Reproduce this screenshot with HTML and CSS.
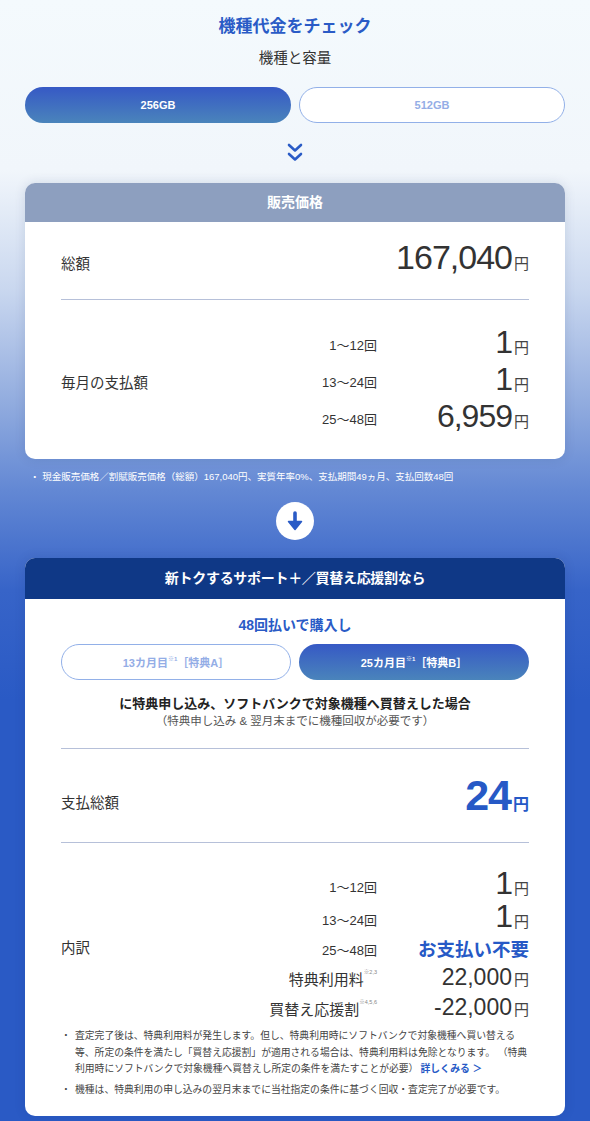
FILE: index.html
```html
<!DOCTYPE html>
<html lang="ja">
  <head>
    <meta charset="UTF-8" />
    <title>機種代金をチェック</title>
    <link rel="stylesheet" href="styles.css">
  </head>
  <body>
    <div class="page">
      <h2 class="title">機種代金をチェック</h2>
      <p class="subtitle">機種と容量</p>

      <div class="pills">
        <button class="pill active">256GB</button>
        <button class="pill">512GB</button>
      </div>

      <div class="chevrons">
        <svg width="18" height="22" viewBox="0 0 18 22">
          <path d="M3 3 L9 8.5 L15 3 M3 12 L9 17.5 L15 12" stroke="#2a5bc6" stroke-width="2.6" fill="none" stroke-linecap="round" stroke-linejoin="round"/>
        </svg>
      </div>

      <section class="card">
        <h3 class="card-head muted">販売価格</h3>
        <div class="card-body">
          <div class="total-row">
            <span class="label">総額</span>
            <span class="price big">167,040<small>円</small></span>
          </div>
          <div class="monthly">
            <span class="label side">毎月の支払額</span>
            <span class="period">1〜12回</span>
            <span class="price big">1<small>円</small></span>
            <span class="period">13〜24回</span>
            <span class="price big">1<small>円</small></span>
            <span class="period">25〜48回</span>
            <span class="price big">6,959<small>円</small></span>
          </div>
        </div>
      </section>

      <p class="outer-note">・ 現金販売価格／割賦販売価格（総額）167,040円、実質年率0%、支払期間49ヵ月、支払回数48回</p>

      <div class="down">
        <svg width="38" height="38" viewBox="0 0 38 38">
          <circle cx="19" cy="19" r="19" fill="#fff"/>
          <path d="M19 11 L19 22" stroke="#2a5bc6" stroke-width="3.6" stroke-linecap="round"/>
          <path d="M12.5 19.5 L25.5 19.5 L19 27.5 Z" fill="#2a5bc6" stroke="#2a5bc6" stroke-width="1.5" stroke-linejoin="round"/>
        </svg>
      </div>

      <section class="card">
        <h3 class="card-head navy">新トクするサポート＋／買替え応援割なら</h3>
        <div class="card-body">
          <p class="lead">48回払いで購入し</p>
          <div class="pills tabs">
            <button class="pill">13カ月目<sup>※1</sup>［特典A］</button>
            <button class="pill active">25カ月目<sup>※1</sup>［特典B］</button>
          </div>
          <p class="cond">に特典申し込み、ソフトバンクで対象機種へ買替えした場合</p>
          <p class="cond-sub">（特典申し込み &amp; 翌月末までに機種回収が必要です）</p>

          <div class="total-row pay">
            <span class="label">支払総額</span>
            <span class="price blue">24<small>円</small></span>
          </div>

          <div class="breakdown">
            <span class="label side">内訳</span>
            <span class="period">1〜12回</span>
            <span class="price big">1<small>円</small></span>
            <span class="period">13〜24回</span>
            <span class="price big">1<small>円</small></span>
            <span class="period">25〜48回</span>
            <span class="price free">お支払い不要</span>
            <span class="period item">特典利用料<sup>※2,3</sup></span>
            <span class="price mid">22,000<small>円</small></span>
            <span class="period item">買替え応援割<sup>※4,5,6</sup></span>
            <span class="price mid">-22,000<small>円</small></span>
          </div>

          <ul class="notes">
            <li>査定完了後は、特典利用料が発生します。但し、特典利用時にソフトバンクで対象機種へ買い替える等、所定の条件を満たし「買替え応援割」が適用される場合は、特典利用料は免除となります。 （特典利用時にソフトバンクで対象機種へ買替えし所定の条件を満たすことが必要）<a class="more">詳しくみる ＞</a></li>
            <li>機種は、特典利用の申し込みの翌月末までに当社指定の条件に基づく回収・査定完了が必要です。</li>
          </ul>
        </div>
      </section>
    </div>
  </body>
</html>
```

FILE: styles.css
```css
* {
  box-sizing: border-box;
  font-family: "Liberation Sans", "Noto Sans CJK JP", sans-serif;
}

body {
  margin: 0;
  padding: 0;
  min-height: 1121px;
  background: linear-gradient(
    to bottom,
    #f4fafd 0,
    #f1f6fb 170px,
    #c9d7ef 290px,
    #93addf 400px,
    #6388d4 490px,
    #3764c8 590px,
    #2a5ac5 700px,
    #2a5ac5 100%
  );
}

.page {
  padding: 15px 25px 9px;
}

.title {
  margin: 0;
  text-align: center;
  font-size: 17px;
  line-height: 24px;
  color: #2a5bc6;
  font-weight: bold;
}

.subtitle {
  margin: 8px 0 0;
  text-align: center;
  font-size: 14.5px;
  line-height: 22px;
  color: #333;
}

.pills {
  display: grid;
  grid-template-columns: 1fr 1fr;
  gap: 8px;
  margin-top: 18px;
}

.pill {
  height: 36px;
  border-radius: 18px;
  border: 1px solid #92b0e8;
  background: #fff;
  color: #94ade6;
  font-size: 11px;
  font-weight: bold;
  cursor: pointer;
}

.pill.active {
  border: none;
  color: #fff;
  background: linear-gradient(to bottom, #3659c5, #4a84bb);
}

.pill sup {
  font-size: 6px;
  vertical-align: top;
  line-height: 10px;
}

.chevrons {
  display: flex;
  justify-content: center;
  margin-top: 19px;
  height: 22px;
}

.card {
  margin-top: 19px;
  background: white;
  border-radius: 10px;
  overflow: hidden;
  box-shadow: 0 0 12px rgba(20, 40, 90, 0.12);
}

.card-head {
  margin: 0;
  text-align: center;
  color: #fff;
  font-size: 14px;
  font-weight: bold;
}

.card-head.muted {
  background: #8d9fbf;
  line-height: 39px;
}

.card-head.navy {
  background: #0f3886;
  line-height: 41px;
  font-size: 14px;
  letter-spacing: -0.3px;
}

.card-body {
  padding: 0 36px;
}

.label {
  font-size: 14.5px;
  color: #333;
}

.total-row {
  display: flex;
  justify-content: space-between;
  align-items: center;
  height: 78px;
  border-bottom: 1px solid #b6c0d9;
}

.total-row .label {
  padding-top: 4px;
}

.price {
  color: #333;
  text-align: right;
  line-height: 1;
  white-space: nowrap;
}

.price small {
  font-size: 15px;
  color: #444;
  margin-left: 2px;
  letter-spacing: 0;
}

.price.big {
  font-size: 32px;
  line-height: 28px;
  letter-spacing: -1px;
}

.total-row .price.big {
  font-size: 34px;
}

.price.mid {
  font-size: 23px;
  line-height: 24px;
}

.price.blue {
  color: #2659c6;
  font-size: 43px;
  font-weight: bold;
  letter-spacing: -1px;
}

.price.blue small {
  color: #2659c6;
  font-size: 16px;
  font-weight: bold;
}

.price.free {
  color: #2659c6;
  font-size: 18.5px;
  line-height: 24px;
  font-weight: bold;
}

.monthly,
.breakdown {
  display: grid;
  grid-template-columns: 1fr auto 152px;
  align-items: center;
}

.monthly {
  grid-template-rows: repeat(3, 37px);
  padding: 26px 0 22px;
}

.side {
  grid-row: 1 / -1;
  grid-column: 1;
}

.period {
  font-size: 13px;
  color: #333;
  text-align: right;
}

.period.item {
  font-size: 15px;
}

.period sup {
  font-size: 5.5px;
  color: #888;
  vertical-align: top;
  line-height: 8px;
}

.outer-note {
  margin: 11px 0 0 5px;
  font-size: 9.5px;
  line-height: 14px;
  color: #fff;
}

.down {
  display: flex;
  justify-content: center;
  margin-top: 18px;
}

.down + .card {
  margin-top: 18px;
}

.lead {
  margin: 0;
  padding-top: 16px;
  text-align: center;
  font-size: 14px;
  line-height: 20px;
  font-weight: bold;
  color: #2a5bc6;
}

.tabs {
  margin-top: 9px;
}

.cond {
  margin: 15px 0 0;
  text-align: center;
  font-size: 13px;
  line-height: 18px;
  font-weight: bold;
  color: #222;
}

.cond-sub {
  margin: 0;
  text-align: center;
  font-size: 11.5px;
  line-height: 16px;
  color: #555;
  padding-bottom: 19px;
  border-bottom: 1px solid #b6c0d9;
}

.total-row.pay {
  height: 94px;
}

.total-row.pay .label {
  padding-top: 12px;
}

.breakdown {
  grid-template-rows: 32px 34px 27px 31px 28px;
  padding: 27px 0 0;
}

.notes {
  list-style: none;
  margin: 6px 0 0;
  padding: 0 0 14px 14px;
}

.notes li {
  position: relative;
  font-size: 9.8px;
  line-height: 16.5px;
  color: #444;
  margin-bottom: 4px;
}

.notes li::before {
  content: "・";
  position: absolute;
  left: -14px;
}

.more {
  color: #2659c6;
  font-weight: bold;
  cursor: pointer;
  margin-left: 2px;
}
```
